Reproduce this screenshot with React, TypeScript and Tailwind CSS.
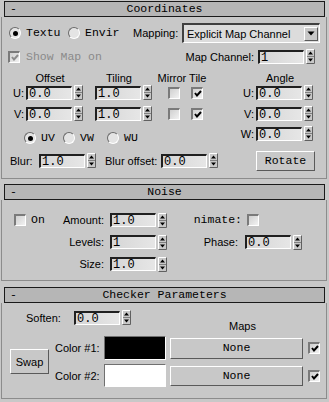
import React from "react";

const mono = "font-['Liberation_Mono','DejaVu_Sans_Mono',monospace]";
const sans = "font-['Liberation_Sans',Arial,sans-serif]";

function Arrows() {
  return (
    <svg width="9" height="15" viewBox="0 0 9 15" className="block shrink-0">
      <rect x="0" y="0" width="9" height="15" fill="#c8c8c8" />
      <path d="M0.5 14.5V0.5H8.5" stroke="#ffffff" fill="none" />
      <path d="M0.5 14.5H8.5V0.5" stroke="#606060" fill="none" />
      <line x1="1" y1="7.5" x2="8" y2="7.5" stroke="#808080" />
      <path d="M4.5 2.5 L7 5.5 H2 Z" fill="#000" />
      <path d="M2 9.5 H7 L4.5 12.5 Z" fill="#000" />
    </svg>
  );
}

function Box({ v, w }: { v: string; w: string }) {
  return (
    <div
      className={`${w} h-[14px] shrink-0 border-t-2 border-l-2 border-t-[#202020] border-l-[#202020] border-b border-r border-b-white border-r-white bg-gradient-to-r from-[#d6d6d6] to-[#e6e6e6] ${mono} text-[12px] leading-[12px] pl-[1px] text-black overflow-hidden whitespace-nowrap`}
    >
      {v}
    </div>
  );
}

function Spin({ v, w = "w-[46px]" }: { v: string; w?: string }) {
  return (
    <div className="flex items-center gap-[2px] shrink-0">
      <Box v={v} w={w} />
      <Arrows />
    </div>
  );
}

function Check({ checked, disabled }: { checked?: boolean; disabled?: boolean }) {
  return (
    <div className="w-[12px] h-[12px] shrink-0 border-t-2 border-l-2 border-t-[#7a7a7a] border-l-[#7a7a7a] border-b border-r border-b-white border-r-white bg-gradient-to-br from-[#d0d0d0] to-[#f2f2f2] flex items-center justify-center">
      {checked && (
        <svg width="8" height="7" viewBox="0 0 8 7" className="block">
          <path d="M1 3 L3 5.5 L7 1" stroke={disabled ? "#8c8c8c" : "#000"} strokeWidth="2" fill="none" />
        </svg>
      )}
    </div>
  );
}

function Radio({ on }: { on?: boolean }) {
  return (
    <div className="w-[12px] h-[12px] shrink-0 rounded-full border border-t-[#6a6a6a] border-l-[#6a6a6a] border-b-white border-r-white bg-[#e4e4e4] flex items-center justify-center">
      {on && <div className="w-[5px] h-[5px] rounded-full bg-black" />}
    </div>
  );
}

function Header({ title }: { title: string }) {
  return (
    <div className={`mx-[4px] h-[16px] shrink-0 border border-[#1a1a1a] bg-[#b6b6b6] flex items-center ${mono} text-[11.5px] leading-[14px] text-black`}>
      <span className="w-[20px] pl-[5px]">-</span>
      <span className="flex-1 text-center">{title}</span>
      <span className="w-[20px]" />
    </div>
  );
}

const btn = "border border-t-white border-l-white border-b-[#5a5a5a] border-r-[#5a5a5a] bg-[#c8c8c8] flex items-center justify-center shrink-0";
const lbl = `${sans} text-[11px] leading-[12px] text-black whitespace-nowrap`;
const mlbl = `${mono} text-[11.5px] leading-[12px] text-black whitespace-nowrap`;

export default function App() {
  return (
    <div className="w-[329px] h-[402px] bg-[#c8c8c8] overflow-hidden flex flex-col pt-[1px]">
      {/* Coordinates */}
      <Header title="Coordinates" />
      <div className="ml-[1px] mr-[2px] border-l border-r border-b border-[#8c8c8c] pb-[7px] flex flex-col">
        <div className="mt-[6px] h-[20px] flex items-center pl-[7px] pr-[4px]">
          <Radio on />
          <span className={`${mlbl} ml-[5px] w-[30px]`}>Textu</span>
          <div className="ml-[12px]"><Radio /></div>
          <span className={`${mlbl} ml-[5px] w-[35px]`}>Envir</span>
          <span className={`${lbl} ml-[13px] w-[47px]`}>Mapping:</span>
          <div className="ml-[2px] w-[138px] h-[20px] border-t-2 border-l-2 border-t-[#404040] border-l-[#404040] border-b border-r border-b-white border-r-white bg-[#dcdcdc] flex items-center">
            <span className={`${lbl} pl-[3px] flex-1`}>Explicit Map Channel</span>
            <div className={`${btn} w-[14px] h-[14px] mr-[1px]`}>
              <svg width="8" height="5" viewBox="0 0 8 5" className="block"><path d="M0.5 0.5 H7.5 L4 4.5 Z" fill="#000" /></svg>
            </div>
          </div>
        </div>
        <div className="mt-[6px] h-[15px] flex items-center pl-[6px] pr-[11px]">
          <Check checked disabled />
          <span className={`${mono} text-[11.5px] leading-[12px] ml-[6px] text-[#8a8a8a] whitespace-nowrap`}>Show Map on</span>
          <span className={`${lbl} ml-auto`}>Map Channel:</span>
          <div className="ml-[4px]"><Spin v="1" /></div>
        </div>
        <div className="mt-[8px] flex">
          <div className="w-[236px] flex flex-col shrink-0">
            <div className="h-[12px] flex">
              <span className={`${lbl} ml-[24px] w-[48px] text-center`}>Offset</span>
              <span className={`${lbl} ml-[21px] w-[48px] text-center`}>Tiling</span>
              <span className={`${lbl} ml-[13px] w-[52px] text-center`}>Mirror Tile</span>
            </div>
            {["U:", "V:"].map((l, i) => (
              <div key={l} className={`${i === 0 ? "mt-[1px]" : "mt-[6px]"} h-[15px] flex items-center`}>
                <span className={`${lbl} w-[23px] text-right pr-[1px]`}>{l}</span>
                <div className="ml-[1px]"><Spin v="0.0" /></div>
                <div className="ml-[12px]"><Spin v="1.0" /></div>
                <div className="ml-[16px]"><Check /></div>
                <div className="ml-[11px]"><Check checked /></div>
              </div>
            ))}
            <div className="mt-[10px] h-[14px] flex items-center">
              <div className="ml-[22px]"><Radio on /></div>
              <span className={`${mlbl} ml-[5px] w-[22px]`}>UV</span>
              <Radio />
              <span className={`${mlbl} ml-[5px] w-[27px]`}>VW</span>
              <Radio />
              <span className={`${mlbl} ml-[5px]`}>WU</span>
            </div>
            <div className="mt-[8px] h-[15px] flex items-center">
              <span className={`${lbl} ml-[8px] w-[29px]`}>Blur:</span>
              <div className="ml-[0px]"><Spin v="1.0" /></div>
              <span className={`${lbl} ml-[9px] w-[54px]`}>Blur offset:</span>
              <div className="ml-[2px]"><Spin v="0.0" /></div>
            </div>
          </div>
          <div className="flex flex-col">
            <div className="h-[12px] flex">
              <span className={`${lbl} ml-[18px] w-[48px] text-center`}>Angle</span>
            </div>
            {["U:", "V:", "W:"].map((l, i) => (
              <div key={l} className={`${i === 0 ? "mt-[1px]" : i === 1 ? "mt-[6px]" : "mt-[5px]"} h-[15px] flex items-center`}>
                <span className={`${lbl} w-[17px] text-right pr-[1px]`}>{l}</span>
                <div className="ml-[1px]"><Spin v="0.0" /></div>
              </div>
            ))}
            <div className={`${btn} mt-[10px] ml-[18px] w-[59px] h-[20px] ${mono} text-[11.5px]`}>Rotate</div>
          </div>
        </div>
      </div>

      {/* Noise */}
      <div className="mt-[5px]"><Header title="Noise" /></div>
      <div className="ml-[1px] mr-[2px] border-l border-r border-b border-[#8c8c8c] pb-[8px] flex flex-col">
        <div className="mt-[12px] h-[16px] flex items-center">
          <div className="ml-[12px]"><Check /></div>
          <span className={`${mlbl} ml-[5px] w-[19px]`}>On</span>
          <span className={`${lbl} w-[54px] text-right`}>Amount:</span>
          <div className="ml-[6px]"><Spin v="1.0" /></div>
          <div className="ml-[25px] w-[50px] flex justify-end">
            <span className={`${mlbl} shrink-0`}>nimate:</span>
          </div>
          <div className="ml-[5px]"><Check /></div>
        </div>
        <div className="mt-[6px] h-[16px] flex items-center">
          <span className={`${lbl} ml-[48px] w-[54px] text-right`}>Levels:</span>
          <div className="ml-[6px]"><Spin v="1" /></div>
          <span className={`${lbl} ml-[23px] w-[48px] text-right`}>Phase:</span>
          <div className="ml-[7px]"><Spin v="0.0" /></div>
        </div>
        <div className="mt-[6px] h-[16px] flex items-center">
          <span className={`${lbl} ml-[48px] w-[54px] text-right`}>Size:</span>
          <div className="ml-[6px]"><Spin v="1.0" /></div>
        </div>
      </div>

      {/* Checker */}
      <div className="mt-[6px]"><Header title="Checker Parameters" /></div>
      <div className="ml-[1px] mr-[2px] border-l border-r border-b border-[#8c8c8c] pb-[11px] flex flex-col">
        <div className="mt-[7px] flex items-start">
          <div className="h-[15px] flex items-center">
            <span className={`${lbl} ml-[24px] w-[48px]`}>Soften:</span>
            <div className="ml-[0px]"><Spin v="0.0" /></div>
          </div>
          <span className={`${lbl} ml-[98px] mt-[9px] leading-[14px]`}>Maps</span>
        </div>
        <div className="mt-[3px] flex items-center">
          <div className={`${btn} ml-[8px] w-[39px] h-[25px] ${lbl}`}>Swap</div>
          <div className="ml-[6px] flex flex-col gap-[4px]">
            {[
              { l: "Color #1:", c: "bg-black", h: "h-[24px]", bh: "h-[21px]" },
              { l: "Color #2:", c: "bg-white", h: "h-[23px]", bh: "h-[20px]" },
            ].map((r) => (
              <div key={r.l} className={`flex items-center ${r.h}`}>
                <span className={`${lbl} w-[49px]`}>{r.l}</span>
                <div className={`w-[62px] ${r.h} ${r.c} border border-t-[#707070] border-l-[#707070] border-b-white border-r-white`} />
                <div className={`${btn} ml-[4px] w-[133px] ${r.bh} ${mono} text-[11.5px]`}>None</div>
                <div className="ml-[5px]"><Check checked /></div>
              </div>
            ))}
          </div>
        </div>
      </div>
    </div>
  );
}
